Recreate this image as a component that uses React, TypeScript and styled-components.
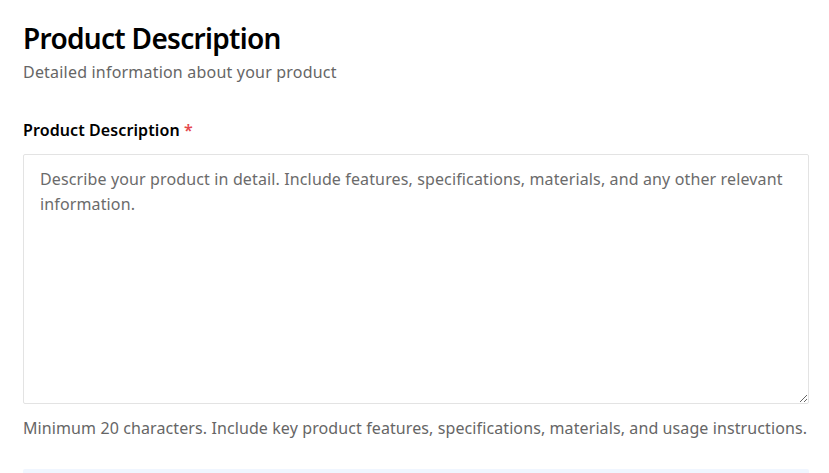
import React from 'react';
import styled, { createGlobalStyle } from 'styled-components';

const GlobalStyle = createGlobalStyle`
    body {
        margin: 0;
        background: #fff;
        font-family: "Noto Sans", "Open Sans", sans-serif;
    }
`;

const App: React.FC = () => {
    return (
        <Page>
            <GlobalStyle />
            <Header>
                <Title>Product Description</Title>
                <Subtitle>Detailed information about your product</Subtitle>
            </Header>
            <Field>
                <Label htmlFor="description">
                    Product Description <Required>*</Required>
                </Label>
                <TextArea
                    id="description"
                    placeholder="Describe your product in detail. Include features, specifications, materials, and any other relevant information."
                />
                <Hint>
                    Minimum 20 characters. Include key product features, specifications, materials, and usage instructions.
                </Hint>
            </Field>
            <InfoBox />
        </Page>
    );
};

export default App;

const Page = styled.div`
    width: 786px;
    height: 473px;
    overflow: hidden;
    padding: 18px 0 0 23px;
    display: flex;
    flex-direction: column;
`;

const Header = styled.div`
    display: flex;
    flex-direction: column;
    margin-bottom: 34px;
`;

const Title = styled.h1`
    margin: 0;
    font-size: 28px;
    line-height: 40px;
    font-weight: 600;
    letter-spacing: -0.7px;
    color: #000;
`;

const Subtitle = styled.p`
    margin: 2px 0 0;
    font-size: 16px;
    line-height: 24px;
    letter-spacing: 0.2px;
    color: #666;
`;

const Field = styled.div`
    display: flex;
    flex-direction: column;
`;

const Label = styled.label`
    font-size: 16px;
    line-height: 24px;
    font-weight: 600;
    letter-spacing: 0.1px;
    color: #000;
    margin-bottom: 12px;
`;

const Required = styled.span`
    color: #e5484d;
`;

const TextArea = styled.textarea`
    box-sizing: border-box;
    width: 100%;
    height: 250px;
    flex-shrink: 0;
    padding: 12px 16px;
    border: 1px solid #e3e3e3;
    border-radius: 2px;
    font-family: inherit;
    font-size: 16px;
    line-height: 25px;
    letter-spacing: 0.13px;
    color: #222;
    resize: vertical;
    outline: none;

    &::placeholder {
        color: #6b6b6b;
    }
`;

const Hint = styled.p`
    margin: 12px 0 0;
    font-size: 16px;
    line-height: 24px;
    letter-spacing: 0.1px;
    white-space: nowrap;
    color: #666;
`;

const InfoBox = styled.div`
    margin-top: 29px;
    height: 60px;
    flex-shrink: 0;
    background: #f0f6ff;
    border-radius: 2px;
`;
